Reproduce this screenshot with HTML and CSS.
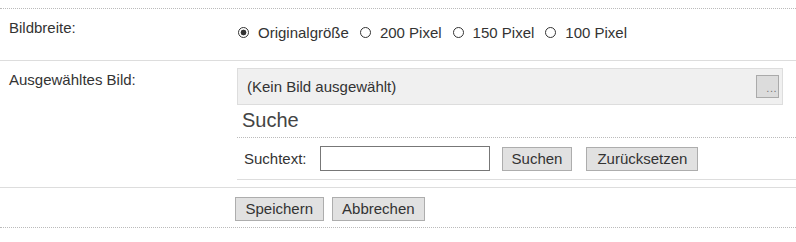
FILE: index.html
```html
<!DOCTYPE html>
<html lang="de">
<head>
<meta charset="utf-8">
<title>Bild</title>
<link rel="stylesheet" href="styles.css">
</head>
<body>
<div class="form">
  <div class="row row-width">
    <div class="label">Bildbreite:</div>
    <div class="field radios">
      <label class="opt"><input type="radio" name="w" checked><span>Originalgröße</span></label>
      <label class="opt"><input type="radio" name="w"><span>200 Pixel</span></label>
      <label class="opt"><input type="radio" name="w"><span>150 Pixel</span></label>
      <label class="opt"><input type="radio" name="w"><span>100 Pixel</span></label>
    </div>
  </div>
  <div class="row row-image">
    <div class="label">Ausgewähltes Bild:</div>
    <div class="field picker">
      <div class="selected">
        <span class="selected-text">(Kein Bild ausgewählt)</span>
        <button class="browse" type="button">...</button>
      </div>
      <div class="search">
        <h2 class="search-title">Suche</h2>
        <div class="search-row">
          <span class="search-label">Suchtext:</span>
          <input class="search-input" type="text">
          <button class="btn btn-search" type="button">Suchen</button>
          <button class="btn btn-reset" type="button">Zurücksetzen</button>
        </div>
      </div>
    </div>
  </div>
  <div class="row row-actions">
    <button class="btn btn-main" type="button">Speichern</button>
    <button class="btn btn-main" type="button">Abbrechen</button>
  </div>
</div>
</body>
</html>
```

FILE: styles.css
```css
* { box-sizing: border-box; }
html, body { margin: 0; padding: 0; background: #fff; }
body {
  font-family: "Liberation Sans", Arial, sans-serif;
  font-size: 15px;
  line-height: 17px;
  color: #333;
  width: 796px;
}
.form { padding-top: 8px; }
.row { display: flex; }
.row-width { border-top: 1px dotted #bbb; border-bottom: 1px solid #ddd; height: 53px; }
.label { width: 237px; padding: 10px 0 0 9px; flex: none; }
.field { flex: 1; min-width: 0; }
.radios { display: flex; align-items: center; align-self: flex-start; padding-top: 15px; }
.opt { display: flex; align-items: center; margin-right: 10px; height: 17px; }
.opt span { white-space: nowrap; }
.opt input {
  appearance: none;
  -webkit-appearance: none;
  width: 11px;
  height: 11px;
  margin: 0 9px 0 1px;
  border: 1px solid #333;
  border-radius: 50%;
  background: #fff;
  flex: none;
}
.opt input:checked { background: radial-gradient(circle, #333 0, #333 2.6px, #fff 3.2px); }

.row-image { border-bottom: 1px solid #ddd; }
.picker { padding-bottom: 7px; }
.selected {
  display: flex;
  align-items: center;
  justify-content: space-between;
  margin: 7px 13px 0 0;
  height: 37px;
  padding-left: 9px;
  padding-right: 3px;
  background: #f0f0f0;
  border: 1px solid #ddd;
}
.browse {
  width: 23px;
  height: 23px;
  padding: 0 1px 3px 0;
  background: #dcdcdc;
  border: 1px solid #aaa;
  font-family: "Liberation Sans", Arial, sans-serif;
  font-size: 11px;
  color: #777;
  line-height: 11px;
  overflow: hidden;
  display: flex;
  align-items: flex-end;
  justify-content: flex-end;
  letter-spacing: 0.5px;
}
.search-title {
  margin: 4px 0 0 0;
  padding: 0 0 5px 5px;
  font-size: 20px;
  line-height: 23px;
  font-weight: normal;
  color: #444;
  border-bottom: 1px dotted #bbb;
}
.search-row {
  display: flex;
  align-items: center;
  padding: 8px 0 8px 7px;
  border-bottom: 1px solid #ddd;
}
.search-label { margin-right: 13px; }
.search-input {
  width: 170px;
  height: 25px;
  margin: 0 12px 0 0;
  border: 1px solid #777;
  background: #fff;
  padding: 0 3px;
  font: inherit;
}
.btn {
  height: 24px;
  padding: 0 9px;
  background: #e1e1e1;
  border: 1px solid #adadad;
  font-family: "Liberation Sans", Arial, sans-serif;
  font-size: 15px;
  color: #333;
  line-height: 20px;
}
.btn-search { margin-right: 14px; padding: 0 9px; }
.btn-reset { padding: 0 10px; }
.row-actions {
  padding: 9px 0 6px 235px;
  border-bottom: 1px dotted #bbb;
  gap: 8px;
}
.btn-main { padding: 0 9.5px; }
```
